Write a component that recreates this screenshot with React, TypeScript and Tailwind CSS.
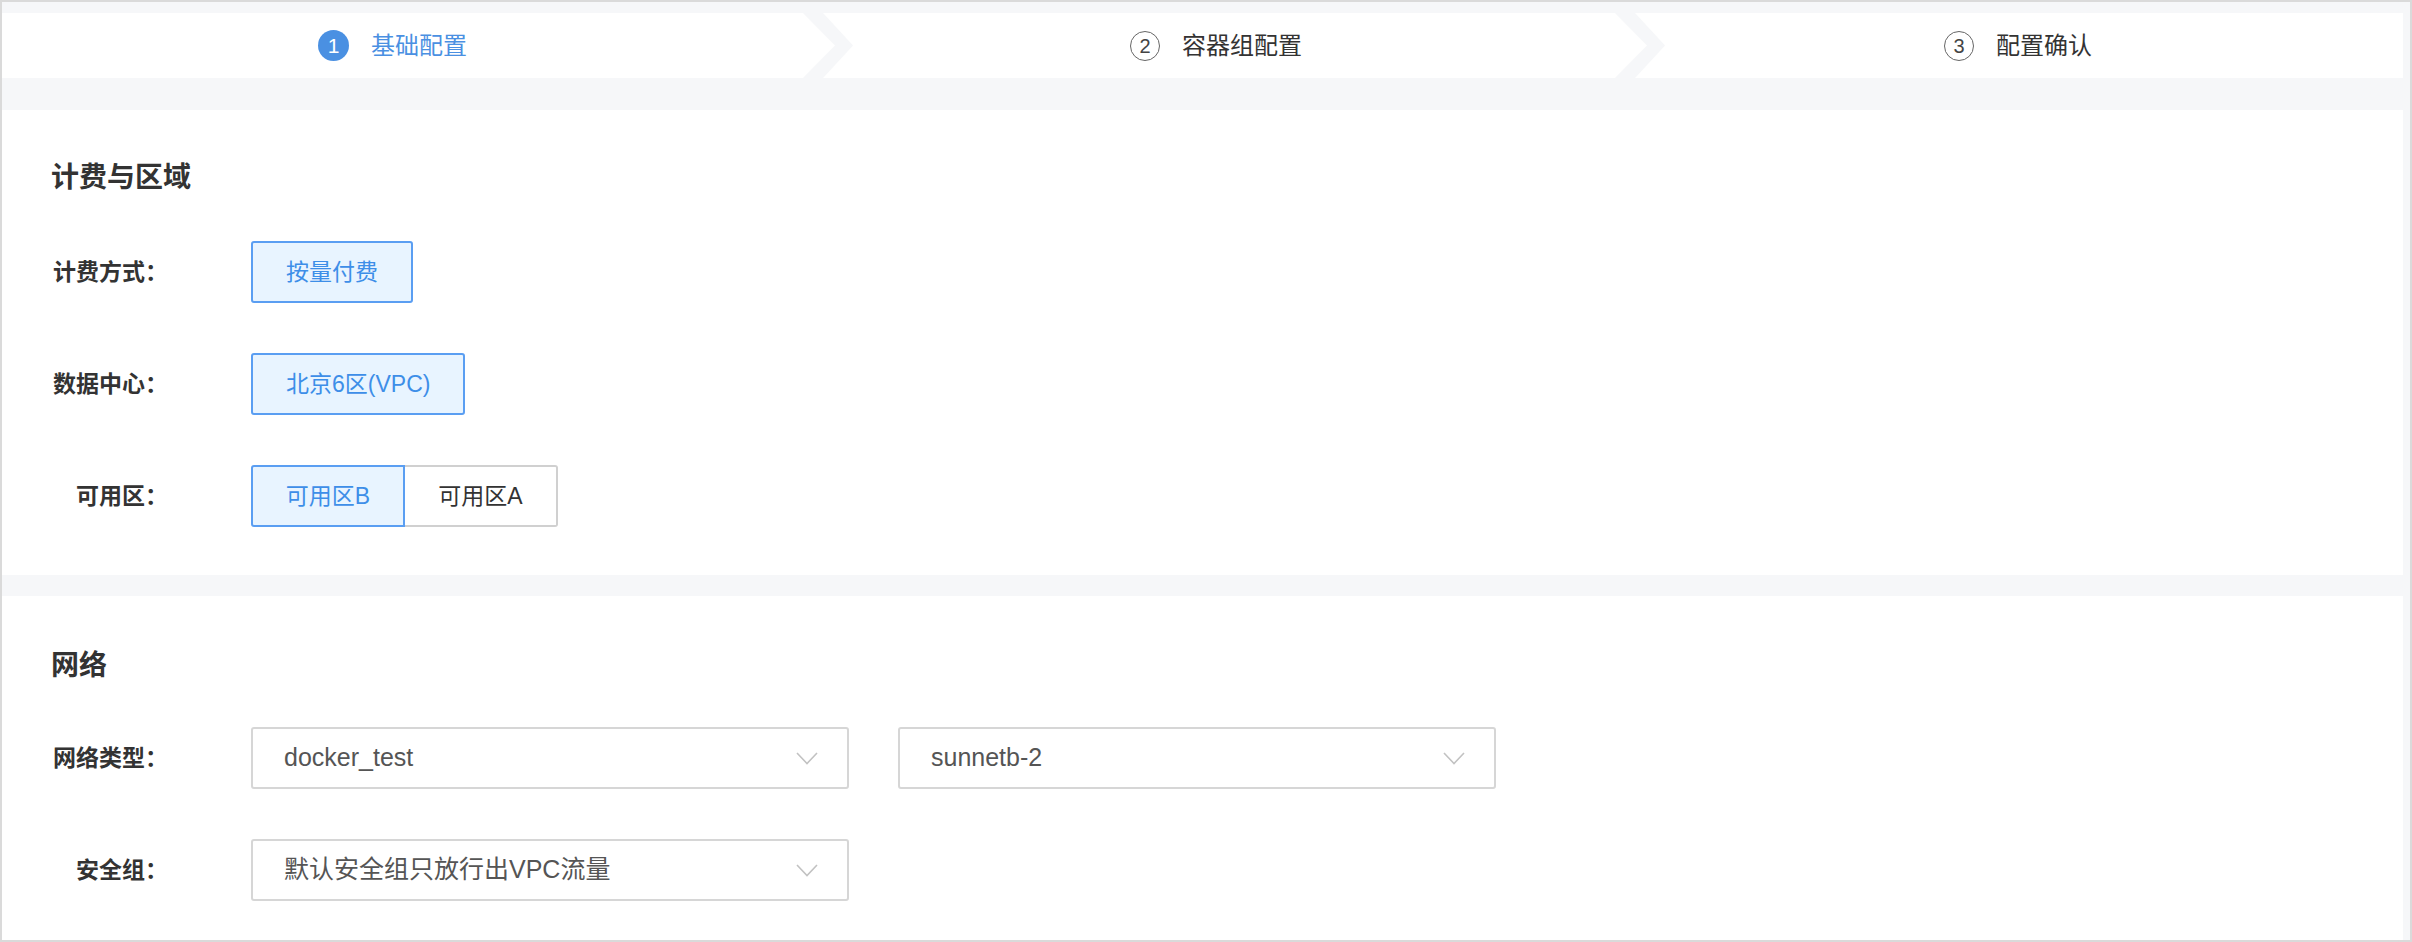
import React from "react"

const font = { fontFamily: '"Liberation Sans", "Noto Sans CJK SC", sans-serif' }

function Chevron() {
  return (
    <svg className="flex-none w-[50px] h-[65px]" viewBox="0 0 50 65" preserveAspectRatio="none">
      <polygon points="0,0 20,0 50,32.5 20,65 0,65 32,32.5" fill="#f6f7f9" />
    </svg>
  )
}

function Step({ n, label, active, className }: { n: number; label: string; active?: boolean; className: string }) {
  return (
    <div className={`flex items-center justify-center ${className}`}>
      {active ? (
        <span className="w-[31px] h-[31px] rounded-full bg-[#4a90e2] text-white text-[21px] flex items-center justify-center">
          {n}
        </span>
      ) : (
        <span className="w-[30px] h-[30px] rounded-full border-[1.5px] border-[#666] text-[#444] text-[20px] flex items-center justify-center">
          {n}
        </span>
      )}
      <span className={`ml-[22px] text-[24px] ${active ? "text-[#4a90e2]" : "text-[#333]"}`}>{label}</span>
    </div>
  )
}

function Label({ children }: { children: React.ReactNode }) {
  return (
    <div className="w-[117px] flex-none text-right text-[23px] font-semibold text-[#333] mr-[83px]">{children}</div>
  )
}

function Select({ value }: { value: string }) {
  return (
    <div className="w-[598px] h-[62px] flex items-center justify-between border-2 border-[#d6d6d6] rounded-[3px] bg-white pl-[31px] pr-[29px]">
      <span className="text-[25px] text-[#555]">{value}</span>
      <svg width="22" height="13" viewBox="0 0 22 13" fill="none">
        <path d="M1 1 L11 11.5 L21 1" stroke="#c2c2c2" strokeWidth="1.6" />
      </svg>
    </div>
  )
}

export default function App() {
  return (
    <div style={font} className="w-[2412px] h-[942px] flex flex-col border-2 border-[#dadada] bg-[#f6f7f9] pt-[11px] pr-[7px] overflow-hidden">
      {/* steps */}
      <div className="h-[65px] flex-none flex bg-white">
        <Step n={1} label="基础配置" active className="w-[801px] flex-none pr-[20px]" />
        <Chevron />
        <Step n={2} label="容器组配置" className="w-[762px] flex-none pr-[36px]" />
        <Chevron />
        <Step n={3} label="配置确认" className="flex-1 pr-[32px]" />
      </div>

      {/* billing & region */}
      <section className="mt-[32px] h-[465px] flex-none bg-white pl-[49px] pt-[48px]">
        <h2 className="h-[40px] leading-[40px] text-[28px] font-bold text-[#333]">计费与区域</h2>
        <div className="mt-[43px] flex flex-col gap-[50px]">
          <div className="flex items-center">
            <Label>计费方式：</Label>
            <button className="h-[62px] px-[33px] border-2 border-[#5a9ef2] rounded-[3px] bg-[#e8f4ff] text-[23px] text-[#3d8ee8]">
              按量付费
            </button>
          </div>
          <div className="flex items-center">
            <Label>数据中心：</Label>
            <button className="h-[62px] px-[33px] border-2 border-[#5a9ef2] rounded-[3px] bg-[#e8f4ff] text-[23px] text-[#3d8ee8]">
              北京6区(VPC)
            </button>
          </div>
          <div className="flex items-center">
            <Label>可用区：</Label>
            <div className="flex">
              <button className="w-[154px] h-[62px] border-2 border-[#5a9ef2] rounded-l-[3px] bg-[#e8f4ff] text-[23px] text-[#3d8ee8]">
                可用区B
              </button>
              <button className="w-[153px] h-[62px] border-2 border-l-0 border-[#d0d0d0] rounded-r-[3px] bg-white text-[23px] text-[#333]">
                可用区A
              </button>
            </div>
          </div>
        </div>
      </section>

      {/* network */}
      <section className="mt-[21px] flex-1 bg-white pl-[49px] pt-[50px]">
        <h2 className="h-[40px] leading-[40px] text-[28px] font-bold text-[#333]">网络</h2>
        <div className="mt-[41px] flex flex-col gap-[50px]">
          <div className="flex items-center">
            <Label>网络类型：</Label>
            <div className="flex gap-[49px]">
              <Select value="docker_test" />
              <Select value="sunnetb-2" />
            </div>
          </div>
          <div className="flex items-center">
            <Label>安全组：</Label>
            <Select value="默认安全组只放行出VPC流量" />
          </div>
        </div>
      </section>
    </div>
  )
}
